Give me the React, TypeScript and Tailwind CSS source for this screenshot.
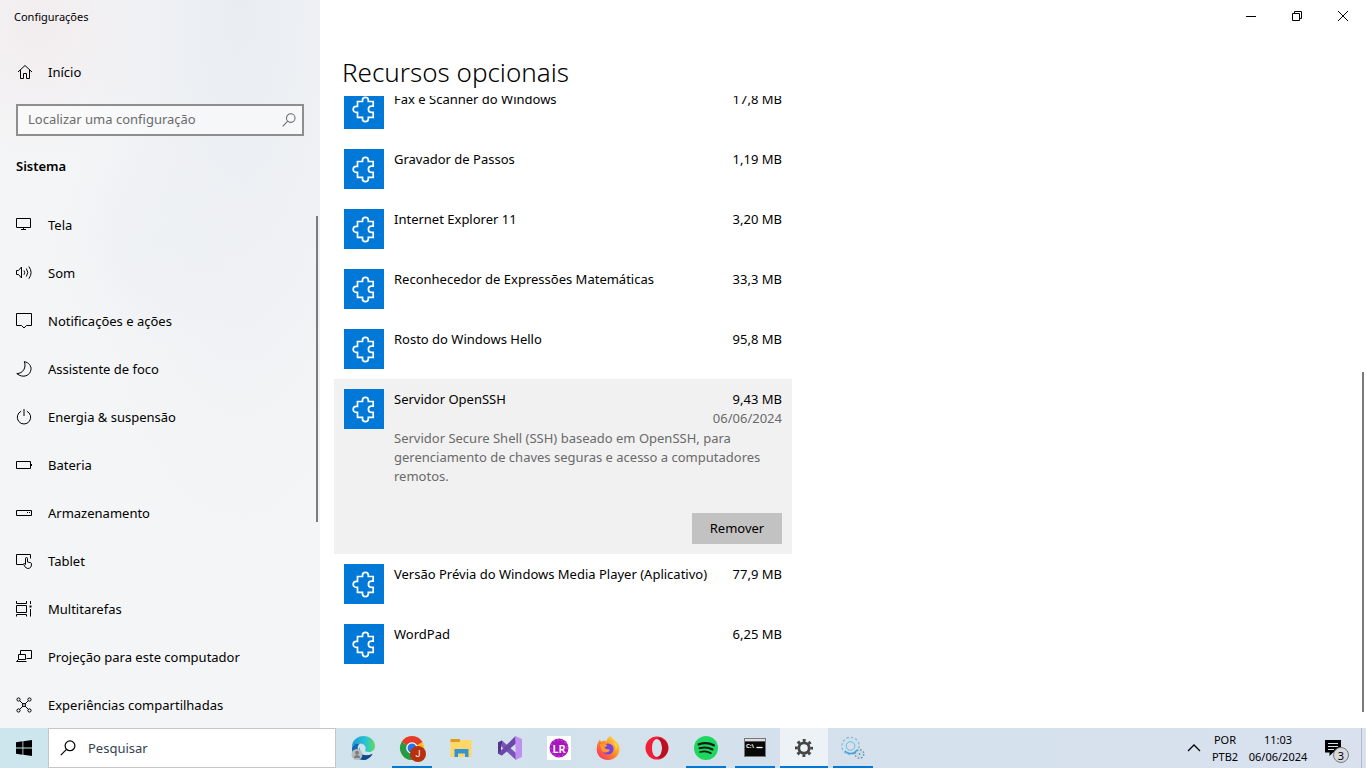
"use client";

import { ReactNode, useState } from "react";
import clsx from "clsx";

// ─── Types ────────────────────────────────────────────────────────────────────
interface NavItem { id: string; label: string; icon: ReactNode }

interface Feature {
  id: string;
  name: string;
  size: string;
  installed?: string;
  description?: string;
}

interface TaskbarApp { id: string; label: string; icon: ReactNode; running?: boolean; active?: boolean }

// ─── Icons ────────────────────────────────────────────────────────────────────
function LineIcon({ children }: { children: ReactNode }) {
  return (
    <svg viewBox="0 0 16 16" className="h-4 w-4 shrink-0" fill="none" stroke="currentColor" strokeWidth="1" aria-hidden="true">
      {children}
    </svg>
  );
}

function PuzzleIcon() {
  return (
    <svg viewBox="0 0 40 40" className="h-10 w-10 shrink-0 bg-[#0078d7]" fill="none" stroke="#fff" strokeWidth="1.7" aria-hidden="true">
      <path d="M13.5 12.5H18.5V11.3a2.9 2.9 0 0 1 5.8 0V12.5H29.2V17.2h-1.7a3.1 3.1 0 0 0 0 6.2h1.7V28.4H24.3v1.3a2.9 2.9 0 0 1-5.8 0V28.4H13.5V23.4H12.2a3 3 0 0 1 0-6h1.3Z" />
    </svg>
  );
}

function SearchIcon({ className }: { className?: string }) {
  return (
    <svg viewBox="0 0 16 16" className={className} fill="none" stroke="currentColor" strokeWidth="1.2" aria-hidden="true">
      <circle cx="10" cy="5.8" r="4.9" />
      <path d="M6.5 9.3.8 15.2" />
    </svg>
  );
}

// ─── Data ─────────────────────────────────────────────────────────────────────
const NAV_ITEMS: NavItem[] = [
  { id: "display", label: "Tela", icon: <LineIcon><path d="M.5 1.5h14v9H.5ZM7.5 10.5v2M5 12.5h5" /></LineIcon> },
  { id: "sound", label: "Som", icon: <LineIcon><path d="M.5 5.5h2l3-3.500v11l-3-3.500h-2ZM8 5.500q1.400 2 0 4.200M10.300 3.500q3 4 0 8M12.800 1.500q4.600 6 0 12.200" /></LineIcon> },
  { id: "notifications", label: "Notificações e ações", icon: <LineIcon><path d="M.5.5h15v12h-5L8 15l-2.500-2.500h-5Z" /></LineIcon> },
  { id: "focus", label: "Assistente de foco", icon: <LineIcon><path d="M8.300.6C13 1.700 15.300 4.800 15 8.500 14.500 14.500 7 17.800.8 12.600 7 12.600 10.600 6.500 8.300.6Z" /></LineIcon> },
  { id: "power", label: "Energia & suspensão", icon: <LineIcon><path d="M8 0v7M5.200 2.200a6.700 6.700 0 1 0 5.600 0" /></LineIcon> },
  { id: "battery", label: "Bateria", icon: <LineIcon><path d="M.5 4.500h14v7H.5ZM15.500 7v2" /></LineIcon> },
  { id: "storage", label: "Armazenamento", icon: <LineIcon><path d="M1 5.500h14.500v5H.5v-5ZM11 7.500h1M13 7.500h1" /></LineIcon> },
  { id: "tablet", label: "Tablet", icon: <LineIcon><path d="M7 11.500H.5v-10h14v4" /><path d="M9.500 11.500V5.800q0-1.300 1-1.300t1 1.300V9l3 .6q1 .3 1 1.500 0 4.400-3.800 4.400-2.200 0-4.200-4.200 0-1 1-.6l1 .8" /></LineIcon> },
  { id: "multitask", label: "Multitarefas", icon: <LineIcon><path d="M.5 0v2.500h10V0M.5 4.500h10v7H.5ZM.5 15.500v-2h10v2M14.500 0v3M14.500 8v7.500" /><path d="M13.500 5.500h2" strokeWidth="2" /></LineIcon> },
  { id: "projecting", label: "Projeção para este computador", icon: <LineIcon><path d="M4.500 5V1.500h11v8h-5M2.500 5.500h7v5h-7ZM2.500 10.500l-2 2h10" /></LineIcon> },
  { id: "shared", label: "Experiências compartilhadas", icon: <LineIcon><path d="m3.500 3.500 9 9M12.500 3.500l-9 9" /><g fill="#f3f4f6"><circle cx="2.500" cy="2.500" r="1.600" /><circle cx="13.500" cy="2.500" r="1.600" /><circle cx="2.500" cy="13.500" r="1.600" /><circle cx="13.500" cy="13.500" r="1.600" /><circle cx="8" cy="8" r="1.500" /></g></LineIcon> },
];

const FEATURES: Feature[] = [
  { id: "fax", name: "Fax e Scanner do Windows", size: "17,8 MB" },
  { id: "steps", name: "Gravador de Passos", size: "1,19 MB" },
  { id: "ie11", name: "Internet Explorer 11", size: "3,20 MB" },
  { id: "math", name: "Reconhecedor de Expressões Matemáticas", size: "33,3 MB" },
  { id: "hello", name: "Rosto do Windows Hello", size: "95,8 MB" },
  {
    id: "openssh",
    name: "Servidor OpenSSH",
    size: "9,43 MB",
    installed: "06/06/2024",
    description: "Servidor Secure Shell (SSH) baseado em OpenSSH, para gerenciamento de chaves seguras e acesso a computadores remotos.",
  },
  { id: "wmp", name: "Versão Prévia do Windows Media Player (Aplicativo)", size: "77,9 MB" },
  { id: "wordpad", name: "WordPad", size: "6,25 MB" },
];

const APPS: TaskbarApp[] = [
  {
    id: "edge",
    label: "Microsoft Edge",
    icon: (
      <>
        <defs>
          <linearGradient id="edgeTop" x1="0" x2="1"><stop stopColor="#1c9bd8" /><stop offset=".6" stopColor="#2cc3d2" /><stop offset="1" stopColor="#5fdc5a" /></linearGradient>
        </defs>
        <path d="M1 11C1 4 6.500 0 12.500 0 19 0 24 4.500 24 10c0 4-3 6-6.500 6-3 0-4-1.300-3-2.800C15.500 11 13 7.500 9 7.500 5 7.500 1.500 9.500 1 11Z" fill="url(#edgeTop)" />
        <path d="M1 11.500C2 8.500 5.500 7 9 7.500 6.500 9 6 12 7.500 15.500 9.500 19.500 15 21 21.500 18 19 22 15.500 24 12 24 5 24 .5 18 1 11.500Z" fill="#1268b4" />
        <path d="M9 11c-2 5 2 11 12.500 7-3 5-7 6-9.500 6-5-2-6-9-3-13Z" fill="#114a8b" />
        <circle cx="6" cy="18.500" r="5.500" fill="#b9bcbe" /><circle cx="6" cy="16.700" r="2" fill="#7b7f82" /><path d="M2.800 22q.4-3 3.200-3t3.200 3Z" fill="#7b7f82" />
      </>
    ),
  },
  {
    id: "chrome",
    label: "Google Chrome",
    running: true,
    icon: (
      <>
        <circle cx="12" cy="12" r="12" fill="#fbc116" />
        <path d="M12 12 1.600 6A12 12 0 0 1 22.400 6Z" fill="#e33b2e" />
        <path d="M12 12 1.600 6A12 12 0 0 0 12 24l5-9Z" fill="#239b48" />
        <circle cx="12" cy="12" r="5.800" fill="#fff" /><circle cx="12" cy="12" r="4.500" fill="#2478e5" />
        <circle cx="18" cy="18" r="8" fill="#b8300e" />
        <text x="18" y="21" textAnchor="middle" fontSize="9" fontFamily="Roboto, sans-serif" fill="#fff">J</text>
      </>
    ),
  },
  {
    id: "explorer",
    label: "Explorador de Arquivos",
    icon: (
      <>
        <path d="M1.500 3h9l1.500 3h-10.500Z" fill="#dc9e18" />
        <path d="M1.500 6h9l2-2h10v17h-21Z" fill="#ffd766" />
        <path d="M5.500 21v-8h14v8h-3.500v-3.500H9V21Z" fill="#3294d6" />
      </>
    ),
  },
  {
    id: "vs",
    label: "Visual Studio",
    icon: (
      <>
        <path d="M0 6.500 4 4.500l14 12.500V24L.5 8Z" fill="#7a55b5" />
        <path d="M0 6.500 4 4.500V8L3 9v6l1 1v3.500L0 17.500Z" fill="#52358c" />
        <path d="M0 17.500 17.500 0 18 7.500 4 19.500Z" fill="#6b47a8" />
        <path d="M17.500 0 24 3v18l-6.500 3Z" fill="#c08ff0" />
      </>
    ),
  },
  {
    id: "lr",
    label: "LR",
    icon: (
      <>
        <path d="M0 0h24v24H0Z" fill="#fff" />
        <circle cx="12" cy="12" r="9.500" fill="#a717bb" />
        <circle cx="12" cy="12" r="8" fill="none" stroke="#d98be6" strokeWidth="1" strokeDasharray="1 3" />
        <text x="12" y="16.500" textAnchor="middle" fontSize="11" fontWeight="600" fill="#fff">LR</text>
      </>
    ),
  },
  {
    id: "firefox",
    label: "Firefox",
    icon: (
      <>
        <defs>
          <linearGradient id="foxBody" x1="1" y1="0" x2="0" y2="1"><stop stopColor="#fff04a" /><stop offset=".45" stopColor="#ff9526" /><stop offset="1" stopColor="#f52265" /></linearGradient>
        </defs>
        <path d="M14.500 0c1.500 3 7.500 5 8.800 11C24.800 18 19 24 12 24 5 24-.2 18.500.8 11.500 1.200 8.500 2 6 4 3.500l1 2.500c2-1.500 4-1.500 5.500-.8C11 2.500 12.500 1 14.500 0Z" fill="url(#foxBody)" />
        <circle cx="12" cy="13" r="5.600" fill="#7543e5" />
        <path d="M3.500 8.500c3-2 6-.5 8 1l-3 2c1 2 4 1.500 5.500 2.500-1 3-6 3.500-8 .5Z" fill="#ff9a2a" />
        <path d="M16 6c3 1.500 4.500 4.500 3.500 8 3-2.500 1.500-7-3.500-8Z" fill="#ffdb3a" />
      </>
    ),
  },
  {
    id: "opera",
    label: "Opera",
    icon: (
      <>
        <path fillRule="evenodd" d="M12 .5a11.500 11.500 0 1 0 0 23 11.500 11.500 0 0 0 0-23Zm0 2.500c3 0 5 4 5 9s-2 9-5 9-5-4-5-9 2-9 5-9Z" fill="#f01f35" />
        <path d="M12 3c2-2 5-1 7.500 1.500C25 9 24 17 19 20.500 16.500 22.500 14 23 12 21c3 0 5-4 5-9s-2-9-5-9Z" fill="#b81222" />
      </>
    ),
  },
  {
    id: "spotify",
    label: "Spotify",
    running: true,
    icon: (
      <>
        <circle cx="12" cy="12" r="12" fill="#1ed760" />
        <g fill="none" stroke="#0d1a12" strokeLinecap="round"><path d="M4.800 8.300Q13 5.500 19.800 9.300" strokeWidth="2.400" /><path d="M5.500 12.300q7-2.100 13 1.200" strokeWidth="2" /><path d="M6 16q6-1.700 11 1.200" strokeWidth="1.600" /></g>
      </>
    ),
  },
  {
    id: "cmd",
    label: "Prompt de Comando",
    running: true,
    icon: (
      <>
        <path d="M1 2h22v19H1Z" fill="#777" /><path d="M2 3h20v2.500H2Z" fill="#ddd" /><path d="M2 5.500h20V20H2Z" fill="#080808" />
        <text x="3" y="12" fontSize="6" fontWeight="700" fill="#fff">C:\</text><path d="M13.500 11.500h6" stroke="#fff" strokeWidth="1.300" />
      </>
    ),
  },
  {
    id: "settings",
    label: "Configurações",
    running: true,
    active: true,
    icon: (
      <g fill="none" stroke="#454545">
        <circle cx="12" cy="12" r="5.200" strokeWidth="2.800" />
        <circle cx="12" cy="12" r="7.600" strokeWidth="2.800" strokeDasharray="2.900 3.069" strokeDashoffset="1.450" />
      </g>
    ),
  },
  {
    id: "services",
    label: "Serviços",
    running: true,
    icon: (
      <g fill="none">
        <circle cx="9.500" cy="10" r="8.300" stroke="#9db5c6" strokeWidth="2" strokeDasharray="2.500 1.845" />
        <circle cx="9.500" cy="10" r="6.300" stroke="#c2e6f7" strokeWidth="3.500" />
        <path d="M4 15a7.500 7.500 0 0 0 12-1" stroke="#4a9fe0" strokeWidth="1.500" />
        <circle cx="9.500" cy="10" r="4.300" stroke="#7e9fb6" strokeWidth=".8" />
        <circle cx="18.500" cy="18" r="4" stroke="#7792a4" strokeWidth="2" strokeDasharray="1.600 1.541" />
        <circle cx="18.500" cy="18" r="2.600" fill="#e3eef6" stroke="#c2dcea" strokeWidth="2" />
        <circle cx="18.500" cy="18" r="1" fill="#67879d" />
      </g>
    ),
  },
];

// ─── Sidebar ──────────────────────────────────────────────────────────────────
function Sidebar() {
  const [search, setSearch] = useState("");

  return (
    <aside className="relative flex w-80 shrink-0 flex-col overflow-hidden bg-[#f4f5f6] bg-[radial-gradient(circle_at_12%_4%,#f2edef_0,transparent_130px),radial-gradient(ellipse_at_75%_0%,#e9edf2_0,transparent_180px),radial-gradient(circle_at_45%_34%,#eff2f5_0,transparent_100px)]">
      <p className="px-3.5 pt-2 text-[11px] leading-[18px]">Configurações</p>

      <a href="#inicio" className="mt-[22px] flex h-12 shrink-0 items-center gap-4 px-4">
        <svg viewBox="0 0 16 16" className="h-4 w-4 shrink-0" fill="none" stroke="currentColor" aria-hidden="true">
          <path d="m2 8 7-6.500L16 8M4.500 6v8.500h3v-5h3v5h3V6" />
        </svg>
        Início
      </a>

      <div className="mx-4 mt-2 flex h-8 shrink-0 items-center border-2 border-[#8d8e8f] bg-white/50 pr-1.5">
        <label htmlFor="settings-search" className="sr-only">Localizar uma configuração</label>
        <input
          id="settings-search"
          value={search}
          onChange={(e) => setSearch(e.target.value)}
          placeholder="Localizar uma configuração"
          className="min-w-0 flex-1 bg-transparent px-2.5 pb-0.5 outline-none placeholder:text-[#6b6b6b]"
        />
        <SearchIcon className="h-3.5 w-3.5 text-[#6b6b6b]" />
      </div>

      <h2 className="mt-5 px-4 font-semibold leading-5">Sistema</h2>

      <nav className="mt-[25px] min-h-0 flex-1 overflow-hidden">
        {NAV_ITEMS.map((item) => (
          <a key={item.id} href={`#${item.id}`} className="flex h-12 items-center gap-4 px-4">
            {item.icon}
            {item.label}
          </a>
        ))}
      </nav>

      <div className="absolute top-[216px] right-0.5 h-[42%] w-0.5 bg-[#7b7c7d]" />
    </aside>
  );
}

// ─── Feature Row ──────────────────────────────────────────────────────────────
function FeatureRow({ feature, open, onSelect }: { feature: Feature; open: boolean; onSelect: () => void }) {
  return (
    <li className={clsx("flex gap-2.5 p-2.5", open && "bg-[#f1f1f1]")}>
      <PuzzleIcon />
      <div className="min-w-0 flex-1 pt-px">
        <button type="button" onClick={onSelect} className="flex min-h-[39px] w-full justify-between text-left">
          <span>{feature.name}</span>
          <span className="text-right">
            {feature.size}
            {open && feature.installed && <span className="block text-[#6a6a6a]">{feature.installed}</span>}
          </span>
        </button>
        {open && (
          <>
            <p className="text-[#6a6a6a]">{feature.description}</p>
            <div className="mt-[27px] flex justify-end">
              <button type="button" className="h-[31px] w-[90px] bg-[#c2c2c2]">Remover</button>
            </div>
          </>
        )}
      </div>
    </li>
  );
}

// ─── Taskbar ──────────────────────────────────────────────────────────────────
function Taskbar() {
  return (
    <footer className="flex h-10 shrink-0 bg-linear-to-r from-[#cde6ee] via-[#d3e1ec] to-[#d9e1ef]">
      <button type="button" aria-label="Iniciar" className="flex w-12 items-center justify-center">
        <svg viewBox="0 0 16 16" className="h-4 w-4" aria-hidden="true">
          <path d="M0 2.200 6.500 1.300v6.200H0ZM7.300 1.200 16 0v7.500H7.300ZM0 8.400h6.500v6.300L0 13.800ZM7.300 8.400H16V16l-8.700-1.200Z" />
        </svg>
      </button>
      <div className="flex w-72 items-center gap-3 border border-[#c6c6c6] bg-white pl-[11px]">
        <SearchIcon className="h-4 w-4" />
        <label htmlFor="taskbar-search" className="sr-only">Pesquisar</label>
        <input id="taskbar-search" placeholder="Pesquisar" className="min-w-0 flex-1 bg-transparent outline-none placeholder:text-[#33424f]" />
      </div>

      <div className="ml-[3px] flex gap-px">
        {APPS.map((app) => (
          <button key={app.id} type="button" aria-label={app.label} className={clsx("relative flex w-12 items-center justify-center", app.active && "bg-[#edf2f7]")}>
            <svg viewBox="0 0 24 24" className="h-6 w-6 overflow-visible" aria-hidden="true">{app.icon}</svg>
            {app.running && <span className={clsx("absolute bottom-0 h-0.5 bg-[#0078d7]", app.active ? "inset-x-0" : "inset-x-1")} />}
          </button>
        ))}
      </div>

      <div className="ml-auto flex items-center text-center text-[11px] leading-[17px]">
        <button type="button" aria-label="Mostrar ícones ocultos" className="px-2">
          <svg viewBox="0 0 14 14" className="h-3.5 w-3.5" fill="none" stroke="currentColor" strokeWidth="1.3" aria-hidden="true"><path d="m1 10 6-6 6 6" /></svg>
        </button>
        <button type="button" className="w-8">POR<br />PTB2</button>
        <button type="button" className="w-[74px]">11:03<br />06/06/2024</button>
        <button type="button" aria-label="Notificações" className="relative h-10 w-[46px] pl-2.5">
          <svg viewBox="0 0 16 16" className="h-4 w-4" aria-hidden="true">
            <path d="M0 0h16v12.500H8L4.500 16v-3.500H0Z" /><path d="M3 3.500h10M3 6.500h10M3 9.500h6" stroke="#d9e1ef" />
          </svg>
          <span className="absolute top-[19px] left-[18px] flex h-4 w-4 items-center justify-center rounded-full border border-[#777] bg-[#d6d9dd]">3</span>
        </button>
        <div className="h-full w-[5px] border-l border-[#b1bac5]" />
      </div>
    </footer>
  );
}

// ─── App ──────────────────────────────────────────────────────────────────────
export default function App() {
  const [selected, setSelected] = useState("openssh");

  return (
    <div className="flex h-screen flex-col overflow-hidden bg-white font-['Noto_Sans','Open_Sans',sans-serif] text-[13px] leading-[19px] text-black">
      <div className="flex min-h-0 flex-1">
        <Sidebar />

        <main className="relative flex min-w-0 flex-1 flex-col">
          <div className="flex h-8 shrink-0 justify-end">
            <button type="button" aria-label="Minimizar" className="flex w-[46px] items-center justify-center">
              <svg viewBox="0 0 10 10" className="h-2.5 w-2.5" stroke="currentColor" aria-hidden="true"><path d="M0 5.5h10" /></svg>
            </button>
            <button type="button" aria-label="Restaurar" className="flex w-[46px] items-center justify-center">
              <svg viewBox="0 0 10 10" className="h-2.5 w-2.5" fill="none" stroke="currentColor" aria-hidden="true"><path d="M.5 2.5h7v7h-7ZM2.5 2.5v-2h7v7h-2" /></svg>
            </button>
            <button type="button" aria-label="Fechar" className="flex w-[46px] items-center justify-center">
              <svg viewBox="0 0 10 10" className="h-2.5 w-2.5" stroke="currentColor" aria-hidden="true"><path d="m0 0 10 10M10 0 0 10" /></svg>
            </button>
          </div>

          <h1 className="mt-5 px-[22px] pb-1 text-[26px] font-light leading-10">Recursos opcionais</h1>

          {/* list is scrolled part of the way into its first row */}
          <div className="min-h-0 flex-1 overflow-hidden pl-3.5">
            <ul className="-mt-[17px] max-w-[458px]">
              {FEATURES.map((feature) => (
                <FeatureRow
                  key={feature.id}
                  feature={feature}
                  open={feature.id === selected && !!feature.description}
                  onSelect={() => setSelected(feature.id)}
                />
              ))}
            </ul>
          </div>

          <div className="absolute right-0.5 bottom-4 h-[340px] w-0.5 bg-[#7b7b7b]" />
        </main>
      </div>
      <Taskbar />
    </div>
  );
}
